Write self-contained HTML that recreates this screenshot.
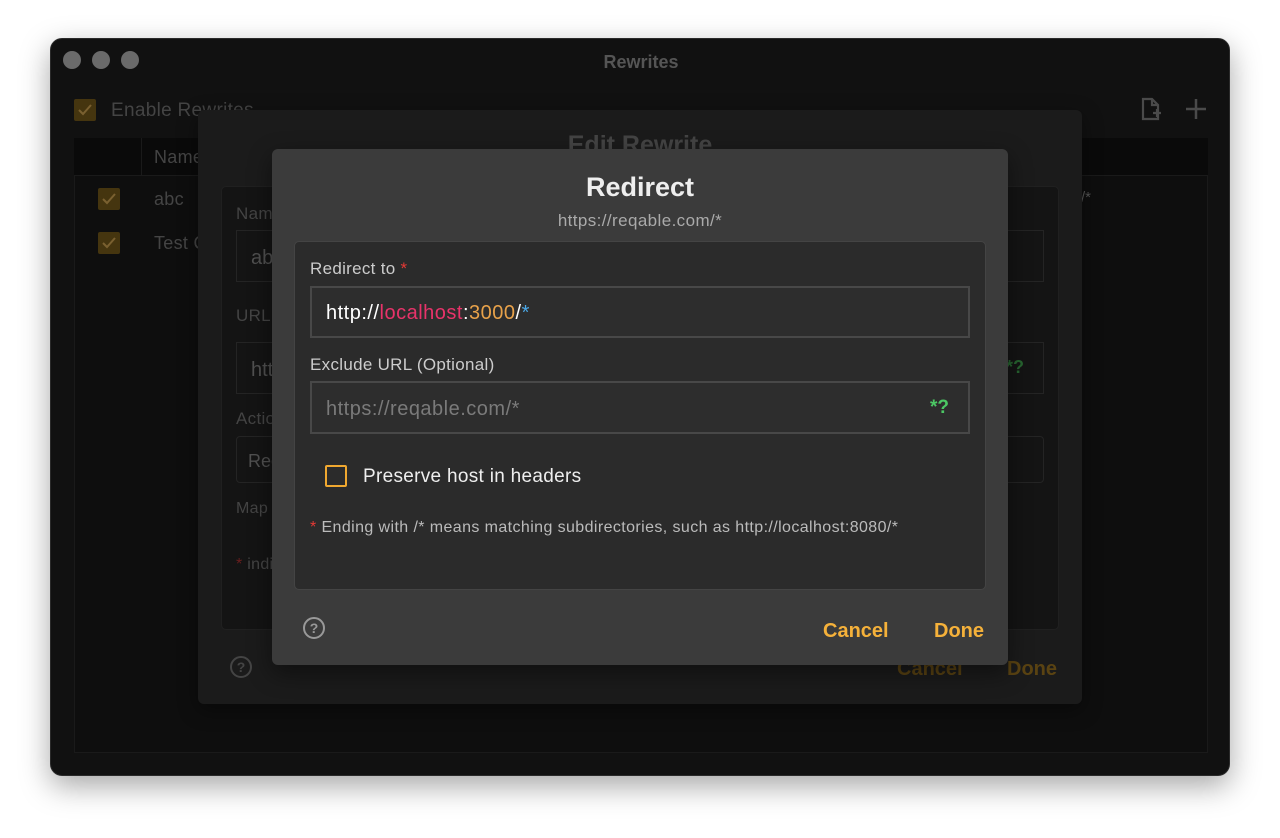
<!DOCTYPE html>
<html><head><meta charset="utf-8"><style>
*{box-sizing:border-box;margin:0;padding:0}
body{width:1280px;height:838px;background:#fff;position:relative;overflow:hidden;font-family:"Liberation Sans",sans-serif}
.a{position:absolute}
.win{left:50px;top:38px;width:1180px;height:738px;background:#111;border-radius:12px;box-shadow:0 10px 30px rgba(0,0,0,.35);border:1px solid #2a2a2a;overflow:hidden}
.dot{width:18px;height:18px;border-radius:50%;background:#6a6a6a;top:12px}
.cb{width:22px;height:22px;background:#45350f;border-radius:2px}
.cb svg{position:absolute;left:3px;top:4px}
.t{color:#444;font-size:18px;letter-spacing:.3px}
</style></head><body>
<div class="a win">
  <div class="a dot" style="left:12px"></div>
  <div class="a dot" style="left:41px"></div>
  <div class="a dot" style="left:70px"></div>
  <div class="a" style="left:0;width:1180px;top:13px;text-align:center;color:#555;font-weight:bold;font-size:18px">Rewrites</div>
  <div class="a cb" style="left:23px;top:60px"><svg width="16" height="14"><path d="M2 7l4 4 8-9" stroke="#7a6030" stroke-width="2" fill="none"/></svg></div>
  <div class="a t" style="left:60px;top:61px;font-size:19px">Enable Rewrites</div>
  <svg class="a" style="left:1088px;top:58px" width="26" height="26"><path d="M4 2h9l6 6v14H4z M13 2v6h6 M14 16h8 M18 12v8" stroke="#4a4a4a" stroke-width="2.2" fill="none"/></svg>
  <svg class="a" style="left:1133px;top:58px" width="24" height="24"><path d="M12 2v20M2 12h20" stroke="#4a4a4a" stroke-width="2.5"/></svg>
  <div class="a" style="left:23px;top:99px;width:1134px;height:615px;background:#0e0e0e;border:1px solid #1a1a1a"></div>
  <div class="a" style="left:23px;top:99px;width:1134px;height:38px;background:#0a0a0a;border-bottom:1px solid #1a1a1a"></div>
  <div class="a" style="left:90px;top:99px;width:1px;height:38px;background:#1a1a1a"></div>
  <div class="a t" style="left:103px;top:108px">Name</div>
  <div class="a cb" style="left:47px;top:149px"><svg width="16" height="14"><path d="M2 7l4 4 8-9" stroke="#7a6030" stroke-width="2" fill="none"/></svg></div>
  <div class="a t" style="left:103px;top:150px">abc</div>
  <div class="a cb" style="left:47px;top:193px"><svg width="16" height="14"><path d="M2 7l4 4 8-9" stroke="#7a6030" stroke-width="2" fill="none"/></svg></div>
  <div class="a t" style="left:103px;top:194px">Test Case</div>
  <div class="a" style="left:1030px;top:150px;color:#555;font-size:15px">/*</div>
</div>
<!-- Edit Rewrite dialog -->
<div class="a" style="left:198px;top:110px;width:884px;height:594px;background:#1b1b1b;border-radius:6px;box-shadow:0 6px 20px rgba(0,0,0,.4)"></div>
<div class="a" style="left:198px;top:131px;width:884px;text-align:center;color:#444;font-weight:bold;font-size:25px">Edit Rewrite</div>
<div class="a" style="left:221px;top:186px;width:838px;height:444px;background:#141414;border:1px solid #202020;border-radius:5px"></div>
<div class="a t" style="left:236px;top:204px;font-size:17px">Name</div>
<div class="a" style="left:236px;top:230px;width:808px;height:52px;border:1px solid #242424"></div>
<div class="a" style="left:251px;top:247px;color:#505050;font-size:20px">abc</div>
<div class="a t" style="left:236px;top:306px;font-size:17px">URL</div>
<div class="a" style="left:236px;top:342px;width:808px;height:52px;border:1px solid #242424"></div>
<div class="a" style="left:251px;top:359px;color:#505050;font-size:20px">https</div>
<div class="a" style="left:1006px;top:357px;color:#276530;font-weight:bold;font-size:18px">*?</div>
<div class="a t" style="left:236px;top:409px;font-size:17px">Action</div>
<div class="a" style="left:236px;top:436px;width:808px;height:47px;border:1px solid #242424;border-radius:4px"></div>
<div class="a" style="left:248px;top:451px;color:#505050;font-size:18px">Redirect</div>
<div class="a t" style="left:236px;top:500px;font-size:16px">Map</div>
<div class="a t" style="left:236px;top:556px;font-size:16px"><span style="color:#6a1e1e">*</span> indicates</div>
<svg class="a" style="left:229px;top:655px" width="24" height="24"><circle cx="12" cy="12" r="10" stroke="#444" stroke-width="2" fill="none"/><text x="12" y="17" text-anchor="middle" fill="#444" font-size="14" font-weight="bold" font-family="Liberation Sans">?</text></svg>
<div class="a" style="left:897px;top:658px;color:#5a4312;font-weight:bold;font-size:20px">Cancel</div>
<div class="a" style="left:1007px;top:658px;color:#5a4312;font-weight:bold;font-size:20px">Done</div>
<!-- Redirect dialog -->
<div class="a" style="left:272px;top:149px;width:736px;height:516px;background:#3b3b3b;border-radius:6px;box-shadow:0 8px 24px rgba(0,0,0,.45)"></div>
<div class="a" style="left:272px;top:172px;width:736px;text-align:center;color:#eee;font-weight:bold;font-size:27px">Redirect</div>
<div class="a" style="left:272px;top:211px;width:736px;text-align:center;color:#aaa;font-size:17px;letter-spacing:.4px">https://reqable.com/*</div>
<div class="a" style="left:294px;top:241px;width:692px;height:349px;background:#2b2b2b;border:1px solid #444;border-radius:5px"></div>
<div class="a" style="left:310px;top:259px;color:#ccc;font-size:17px;letter-spacing:.3px">Redirect to <span style="color:#e53935">*</span></div>
<div class="a" style="left:310px;top:286px;width:660px;height:52px;background:#2d2d2d;border:2px solid #484848"></div>
<div class="a" style="left:326px;top:302px;font-size:20px;letter-spacing:.5px;color:#fff">http://<span style="color:#e8336a">localhost</span>:<span style="color:#e8a24a">3000</span>/<span style="color:#4aa8e8">*</span></div>
<div class="a" style="left:310px;top:355px;color:#ccc;font-size:17px;letter-spacing:.3px">Exclude URL (Optional)</div>
<div class="a" style="left:310px;top:381px;width:660px;height:53px;background:#2d2d2d;border:2px solid #484848"></div>
<div class="a" style="left:326px;top:398px;font-size:20px;letter-spacing:.5px;color:#7a7a7a">https://reqable.com/*</div>
<div class="a" style="left:930px;top:397px;font-size:19px;font-weight:bold;color:#4cc764">*?</div>
<div class="a" style="left:325px;top:465px;width:22px;height:22px;border:2px solid #f0a830;border-radius:2px"></div>
<div class="a" style="left:363px;top:466px;font-size:19px;letter-spacing:.3px;color:#eee">Preserve host in headers</div>
<div class="a" style="left:310px;top:519px;font-size:16px;letter-spacing:.4px;color:#bbb"><span style="color:#e53935">*</span> Ending with /* means matching subdirectories, such as http://localhost:8080/*</div>
<svg class="a" style="left:302px;top:616px" width="24" height="24"><circle cx="12" cy="12" r="10" stroke="#999" stroke-width="2" fill="none"/><text x="12" y="17" text-anchor="middle" fill="#999" font-size="14" font-weight="bold" font-family="Liberation Sans">?</text></svg>
<div class="a" style="left:823px;top:620px;color:#f5b13a;font-weight:bold;font-size:20px">Cancel</div>
<div class="a" style="left:934px;top:620px;color:#f5b13a;font-weight:bold;font-size:20px">Done</div>
</body></html>
